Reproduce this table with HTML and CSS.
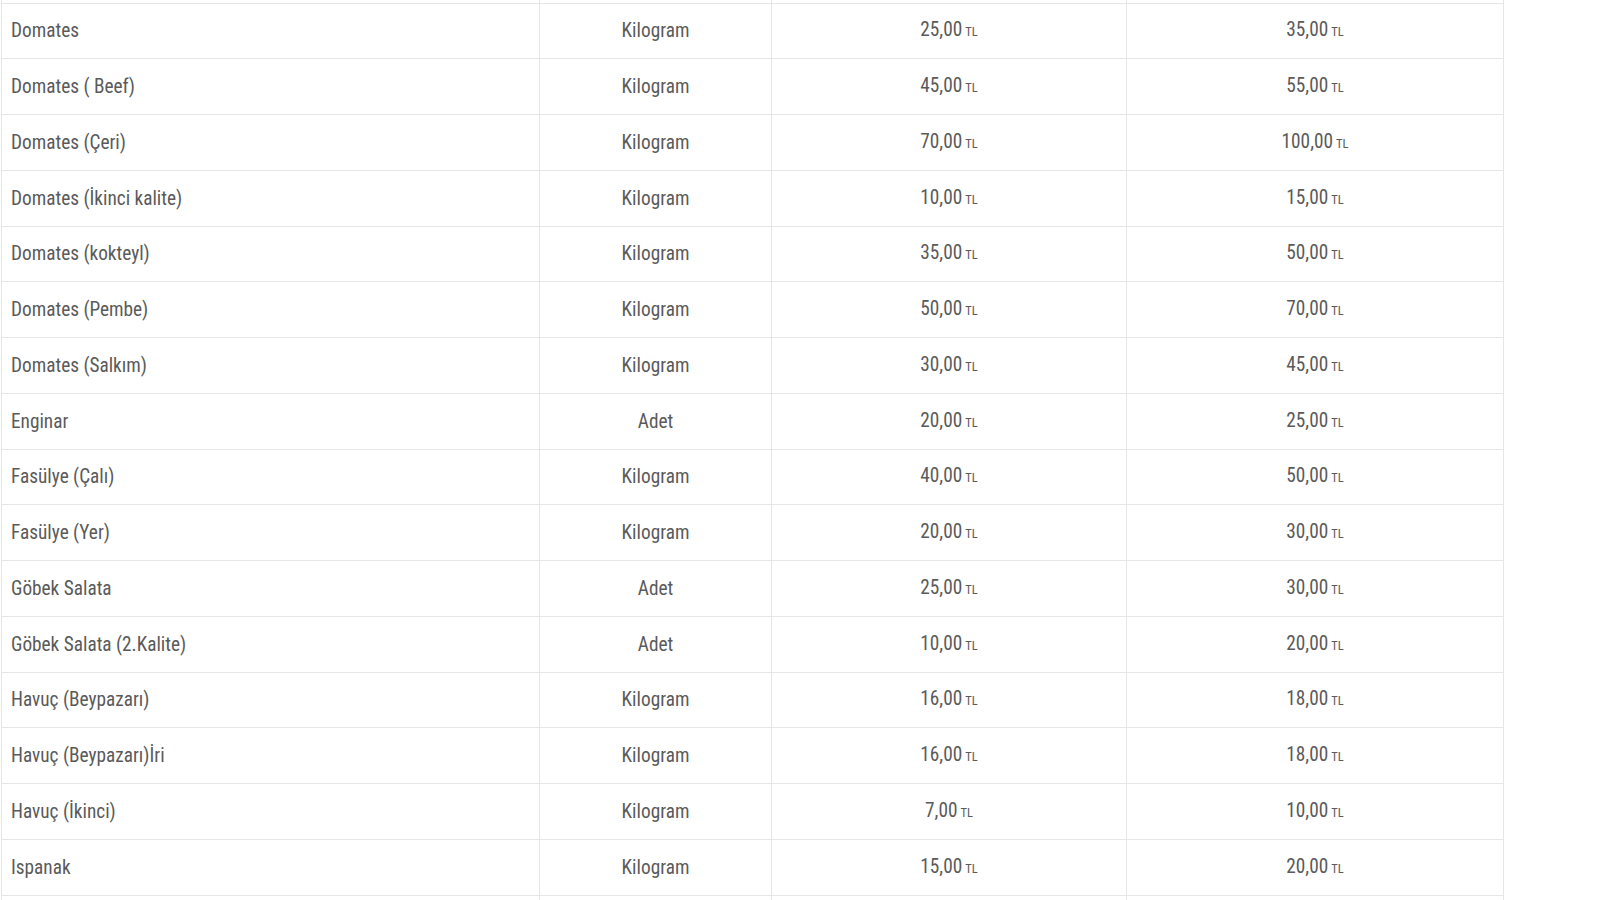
FILE: index.html
```html
<!DOCTYPE html>
<html lang="tr">
<head>
<meta charset="utf-8">
<title>Fiyat Listesi</title>
<link rel="stylesheet" href="styles.css">
</head>
<body>
<div class="table">
  <div class="row spacer"><div class="cell"></div><div class="cell"></div><div class="cell"></div><div class="cell"></div></div>
  <div class="row"><div class="cell name">Domates</div><div class="cell unit">Kilogram</div><div class="cell price"><span class="amt">25,00<span class="cur">TL</span></span></div><div class="cell price"><span class="amt">35,00<span class="cur">TL</span></span></div></div>
  <div class="row"><div class="cell name">Domates ( Beef)</div><div class="cell unit">Kilogram</div><div class="cell price"><span class="amt">45,00<span class="cur">TL</span></span></div><div class="cell price"><span class="amt">55,00<span class="cur">TL</span></span></div></div>
  <div class="row"><div class="cell name">Domates (Çeri)</div><div class="cell unit">Kilogram</div><div class="cell price"><span class="amt">70,00<span class="cur">TL</span></span></div><div class="cell price"><span class="amt">100,00<span class="cur">TL</span></span></div></div>
  <div class="row"><div class="cell name">Domates (İkinci kalite)</div><div class="cell unit">Kilogram</div><div class="cell price"><span class="amt">10,00<span class="cur">TL</span></span></div><div class="cell price"><span class="amt">15,00<span class="cur">TL</span></span></div></div>
  <div class="row"><div class="cell name">Domates (kokteyl)</div><div class="cell unit">Kilogram</div><div class="cell price"><span class="amt">35,00<span class="cur">TL</span></span></div><div class="cell price"><span class="amt">50,00<span class="cur">TL</span></span></div></div>
  <div class="row"><div class="cell name">Domates (Pembe)</div><div class="cell unit">Kilogram</div><div class="cell price"><span class="amt">50,00<span class="cur">TL</span></span></div><div class="cell price"><span class="amt">70,00<span class="cur">TL</span></span></div></div>
  <div class="row"><div class="cell name">Domates (Salkım)</div><div class="cell unit">Kilogram</div><div class="cell price"><span class="amt">30,00<span class="cur">TL</span></span></div><div class="cell price"><span class="amt">45,00<span class="cur">TL</span></span></div></div>
  <div class="row"><div class="cell name">Enginar</div><div class="cell unit">Adet</div><div class="cell price"><span class="amt">20,00<span class="cur">TL</span></span></div><div class="cell price"><span class="amt">25,00<span class="cur">TL</span></span></div></div>
  <div class="row"><div class="cell name">Fasülye (Çalı)</div><div class="cell unit">Kilogram</div><div class="cell price"><span class="amt">40,00<span class="cur">TL</span></span></div><div class="cell price"><span class="amt">50,00<span class="cur">TL</span></span></div></div>
  <div class="row"><div class="cell name">Fasülye (Yer)</div><div class="cell unit">Kilogram</div><div class="cell price"><span class="amt">20,00<span class="cur">TL</span></span></div><div class="cell price"><span class="amt">30,00<span class="cur">TL</span></span></div></div>
  <div class="row"><div class="cell name">Göbek Salata</div><div class="cell unit">Adet</div><div class="cell price"><span class="amt">25,00<span class="cur">TL</span></span></div><div class="cell price"><span class="amt">30,00<span class="cur">TL</span></span></div></div>
  <div class="row"><div class="cell name">Göbek Salata (2.Kalite)</div><div class="cell unit">Adet</div><div class="cell price"><span class="amt">10,00<span class="cur">TL</span></span></div><div class="cell price"><span class="amt">20,00<span class="cur">TL</span></span></div></div>
  <div class="row"><div class="cell name">Havuç (Beypazarı)</div><div class="cell unit">Kilogram</div><div class="cell price"><span class="amt">16,00<span class="cur">TL</span></span></div><div class="cell price"><span class="amt">18,00<span class="cur">TL</span></span></div></div>
  <div class="row"><div class="cell name">Havuç (Beypazarı)İri</div><div class="cell unit">Kilogram</div><div class="cell price"><span class="amt">16,00<span class="cur">TL</span></span></div><div class="cell price"><span class="amt">18,00<span class="cur">TL</span></span></div></div>
  <div class="row"><div class="cell name">Havuç (İkinci)</div><div class="cell unit">Kilogram</div><div class="cell price"><span class="amt">7,00<span class="cur">TL</span></span></div><div class="cell price"><span class="amt">10,00<span class="cur">TL</span></span></div></div>
  <div class="row"><div class="cell name">Ispanak</div><div class="cell unit">Kilogram</div><div class="cell price"><span class="amt">15,00<span class="cur">TL</span></span></div><div class="cell price"><span class="amt">20,00<span class="cur">TL</span></span></div></div>
  <div class="row"><div class="cell"></div><div class="cell"></div><div class="cell"></div><div class="cell"></div></div>
</div>
</body>
</html>
```
FILE: styles.css
```css
html, body {
  margin: 0;
  padding: 0;
  background: #ffffff;
  height: 900px;
  overflow: hidden;
}

body {
  font-family: Roboto, "Liberation Sans", sans-serif;
  font-stretch: 87%;
  color: #5a5a5a;
}

.table {
  margin-left: 1px;
  width: 1503px;
}

.row {
  display: grid;
  grid-template-columns: 538px 232px 355px 378px;
  height: 55.75px;
  box-sizing: border-box;
  border-bottom: 1px solid #e6e6e6;
}

.row.spacer {
  height: 3.5px;
}

.cell {
  display: flex;
  align-items: center;
  border-left: 1px solid #e6e6e6;
  font-size: 19.3px;
  white-space: nowrap;
}

.cell:last-child {
  border-right: 1px solid #e6e6e6;
}

.name {
  padding-left: 9px;
}

.unit,
.price {
  justify-content: center;
}

.amt {
  margin-top: -2px;
}

.cur {
  font-size: 12.5px;
  margin-left: 3px;
}
```
